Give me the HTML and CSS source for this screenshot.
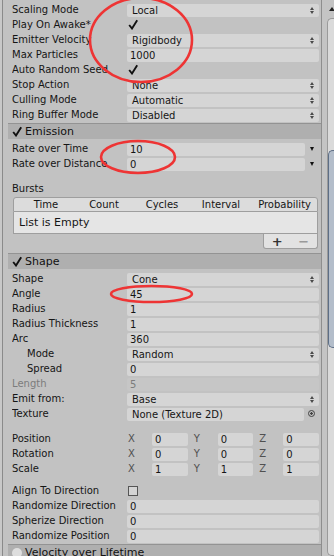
FILE: index.html
```html
<!DOCTYPE html>
<html lang="en">
<head>
    <meta charset="UTF-8">
    <title>Particle System Inspector</title>
    <link rel="stylesheet" href="styles.css">
</head>
<body>
    <div class="screen">
        <div class="inspector">
            <div class="rows first">
                <div class="row"><span class="label">Scaling Mode</span><div class="field popup">Local<i class="updown"></i></div></div>
                <div class="row"><span class="label">Play On Awake*</span><svg class="tick" viewBox="0 0 10 11"><path d="M1.2 6 L4 9.5 L9.2 1.2"/></svg></div>
                <div class="row"><span class="label">Emitter Velocity</span><div class="field popup">Rigidbody<i class="updown"></i></div></div>
                <div class="row"><span class="label">Max Particles</span><div class="field num">1000</div></div>
                <div class="row"><span class="label">Auto Random Seed</span><svg class="tick" viewBox="0 0 10 11"><path d="M1.2 6 L4 9.5 L9.2 1.2"/></svg></div>
                <div class="row"><span class="label">Stop Action</span><div class="field popup">None<i class="updown"></i></div></div>
                <div class="row"><span class="label">Culling Mode</span><div class="field popup">Automatic<i class="updown"></i></div></div>
                <div class="row"><span class="label">Ring Buffer Mode</span><div class="field popup">Disabled<i class="updown"></i></div></div>
            </div>

            <div class="header"><svg class="tick" viewBox="0 0 10 11"><path d="M1.2 6 L4 9.5 L9.2 1.2"/></svg>Emission</div>
            <div class="rows">
                <div class="row"><span class="label">Rate over Time</span><div class="field num">10</div><i class="curve"></i></div>
                <div class="row"><span class="label">Rate over Distance</span><div class="field num">0</div><i class="curve"></i></div>
                <div class="row bursts-title"><span class="label">Bursts</span></div>
            </div>
            <div class="bursts">
                <div class="bursts-head">
                    <span>Time</span><span>Count</span><span>Cycles</span><span>Interval</span><span>Probability</span>
                </div>
                <div class="bursts-body">List is Empty</div>
                <div class="bursts-foot"><span class="plus">+</span><span class="minus">&minus;</span></div>
            </div>

            <div class="header"><svg class="tick" viewBox="0 0 10 11"><path d="M1.2 6 L4 9.5 L9.2 1.2"/></svg>Shape</div>
            <div class="rows">
                <div class="row"><span class="label">Shape</span><div class="field popup">Cone<i class="updown"></i></div></div>
                <div class="row"><span class="label">Angle</span><div class="field num">45</div></div>
                <div class="row"><span class="label">Radius</span><div class="field num">1</div></div>
                <div class="row"><span class="label">Radius Thickness</span><div class="field num">1</div></div>
                <div class="row"><span class="label">Arc</span><div class="field num">360</div></div>
                <div class="row"><span class="label sub">Mode</span><div class="field popup">Random<i class="updown"></i></div></div>
                <div class="row"><span class="label sub">Spread</span><div class="field num">0</div></div>
                <div class="row off"><span class="label">Length</span><div class="field num">5</div></div>
                <div class="row"><span class="label">Emit from:</span><div class="field popup">Base<i class="updown"></i></div></div>
                <div class="row"><span class="label">Texture</span><div class="field obj">None (Texture 2D)</div><i class="picker"></i></div>
            </div>
            <div class="rows gap">
                <div class="row"><span class="label">Position</span>
                    <div class="vec"><span>X</span><div class="field num">0</div></div>
                    <div class="vec"><span>Y</span><div class="field num">0</div></div>
                    <div class="vec"><span>Z</span><div class="field num">0</div></div>
                </div>
                <div class="row"><span class="label">Rotation</span>
                    <div class="vec"><span>X</span><div class="field num">0</div></div>
                    <div class="vec"><span>Y</span><div class="field num">0</div></div>
                    <div class="vec"><span>Z</span><div class="field num">0</div></div>
                </div>
                <div class="row"><span class="label">Scale</span>
                    <div class="vec"><span>X</span><div class="field num">1</div></div>
                    <div class="vec"><span>Y</span><div class="field num">1</div></div>
                    <div class="vec"><span>Z</span><div class="field num">1</div></div>
                </div>
            </div>
            <div class="rows gap-small">
                <div class="row"><span class="label">Align To Direction</span><i class="box"></i></div>
                <div class="row"><span class="label">Randomize Direction</span><div class="field num">0</div></div>
                <div class="row"><span class="label">Spherize Direction</span><div class="field num">0</div></div>
                <div class="row"><span class="label">Randomize Position</span><div class="field num">0</div></div>
            </div>

            <div class="header"><i class="dot"></i>Velocity over Lifetime</div>
        </div>

        <div class="scrollbar">
            <div class="scroll-up"><i></i></div>
            <div class="track"><div class="thumb"></div></div>
        </div>

        <svg class="marks" width="334" height="556" viewBox="0 0 334 556">
            <ellipse cx="141" cy="40" rx="51" ry="42"/>
            <ellipse cx="138" cy="157" rx="37" ry="16"/>
            <ellipse cx="151.5" cy="294" rx="40.5" ry="8"/>
        </svg>
    </div>
</body>
</html>
```

FILE: styles.css
```css
body {
    margin: 0;
    background: #c8c8c8;
    font-family: "DejaVu Sans", Verdana, sans-serif;
    font-size: 10px;
    color: #151515;
    overflow: hidden;
}
.screen {
    position: relative;
    display: flex;
    width: 334px;
    height: 556px;
    padding-left: 2px;
    box-sizing: border-box;
    overflow: hidden;
}
.inspector {
    width: 318px;
    flex-shrink: 0;
    background: #c2c2c2;
    border-left: 1px solid #8a8a8a;
    border-right: 1px solid #8e8e8e;
    display: flex;
    flex-direction: column;
}
.rows {
    display: flex;
    flex-direction: column;
    padding-top: 2px;
}
.rows.gap {
    padding-top: 10px;
}
.rows.gap-small {
    padding-top: 7px;
}
.row {
    height: 15px;
    flex-shrink: 0;
    display: flex;
    align-items: center;
    padding-left: 9px;
    padding-right: 2px;
    white-space: nowrap;
}
.label {
    width: 115px;
    flex-shrink: 0;
    overflow: hidden;
}
.label.sub {
    padding-left: 15px;
    width: 100px;
}
.row.off {
    color: #7c7c7c;
}
.field {
    flex: 1;
    height: 13px;
    margin-top: 1px;
    background: #d5d5d5;
    border-radius: 2px;
    display: flex;
    align-items: center;
    justify-content: space-between;
    padding-left: 3px;
    box-sizing: border-box;
    overflow: hidden;
}
.field.popup {
    padding-left: 5px;
}
.row.off .field {
    background: #c6c6c6;
}
.updown {
    display: flex;
    flex-direction: column;
    gap: 1px;
    margin-right: 5px;
}
.updown::before {
    content: "";
    border-left: 2px solid transparent;
    border-right: 2px solid transparent;
    border-bottom: 3px solid #4a4a4a;
}
.updown::after {
    content: "";
    border-left: 2px solid transparent;
    border-right: 2px solid transparent;
    border-top: 3px solid #4a4a4a;
}
.curve {
    width: 14px;
    flex-shrink: 0;
    display: flex;
    justify-content: center;
}
.curve::before {
    content: "";
    border-left: 2.5px solid transparent;
    border-right: 2.5px solid transparent;
    border-top: 4px solid #111;
}
.field.obj {
    padding-left: 5px;
}
.picker {
    width: 15px;
    height: 13px;
    flex-shrink: 0;
    display: flex;
    align-items: center;
    justify-content: center;
}
.picker::before {
    content: "";
    width: 5px;
    height: 5px;
    border: 1.5px solid #444;
    border-radius: 50%;
    background: radial-gradient(circle, #444 0 1px, transparent 1.5px);
}
.tick {
    width: 10px;
    height: 11px;
    margin-left: 1px;
    flex-shrink: 0;
}
.tick path {
    fill: none;
    stroke: #111;
    stroke-width: 1.9;
}
.box {
    width: 8px;
    height: 8px;
    margin-left: 1px;
    border: 1px solid #555;
    background: #d4d4d4;
}
.vec {
    flex: 1;
    display: flex;
    align-items: center;
}
.vec + .vec {
    margin-left: 5px;
}
.vec span {
    width: 24px;
    padding-left: 1px;
    color: #505050;
    flex-shrink: 0;
}
.header {
    height: 16px;
    margin-top: 1px;
    margin-left: 5px;
    flex-shrink: 0;
    background: #afafaf;
    border-top: 1px solid #939393;
    box-sizing: border-box;
    display: flex;
    align-items: center;
    gap: 3px;
    padding-left: 3px;
    font-size: 11px;
    color: #111;
}
.dot {
    width: 10px;
    height: 10px;
    margin-left: 1px;
    border-radius: 50%;
    background: #dedede;
}
.bursts-title {
    margin-top: 10px;
}
.bursts {
    margin: 1px 3px 3px 10px;
    display: flex;
    flex-direction: column;
}
.bursts-head {
    height: 15px;
    display: grid;
    grid-template-columns: 64px 52px 64px 54px 1fr;
    align-items: center;
    text-align: center;
    background: #dcdcdc;
    border: 1px solid #9e9e9e;
    border-radius: 3px 3px 0 0;
    box-sizing: border-box;
}
.bursts-head span:last-child {
    text-align: right;
    padding-right: 6px;
}
.bursts-body {
    height: 22px;
    background: #e5e5e5;
    border: 1px solid #9e9e9e;
    border-top: none;
    box-sizing: border-box;
    display: flex;
    align-items: center;
    padding-left: 5px;
    font-size: 11px;
}
.bursts-foot {
    align-self: flex-end;
    width: 55px;
    height: 15px;
    background: #e2e2e2;
    border: 1px solid #9e9e9e;
    border-top: none;
    border-radius: 0 0 3px 3px;
    box-sizing: border-box;
    display: flex;
    align-items: center;
    justify-content: space-around;
    font-size: 13px;
    font-weight: bold;
}
.plus {
    color: #333;
}
.minus {
    color: #9a9a9a;
}
.scrollbar {
    flex: 1;
    display: flex;
    flex-direction: column;
    background: #c4c4c4;
}
.scroll-up {
    height: 18px;
    display: flex;
    align-items: center;
    padding-left: 7px;
}
.scroll-up i {
    border-left: 3px solid transparent;
    border-right: 3px solid transparent;
    border-bottom: 4px solid #222;
}
.track {
    flex: 1;
    margin-left: 5px;
    background: #dadada;
    border: 1px solid #9a9a9a;
    border-right: none;
    border-radius: 5px 0 0 5px;
}
.thumb {
    margin-top: 131px;
    height: 196px;
    background: #b3bdca;
    border: 1px solid #5d6e86;
    border-right: none;
    border-radius: 5px 0 0 5px;
}
.marks {
    position: absolute;
    left: 0;
    top: 0;
    pointer-events: none;
}
.marks ellipse {
    fill: none;
    stroke: #ee3434;
    stroke-width: 2.6;
}
```
